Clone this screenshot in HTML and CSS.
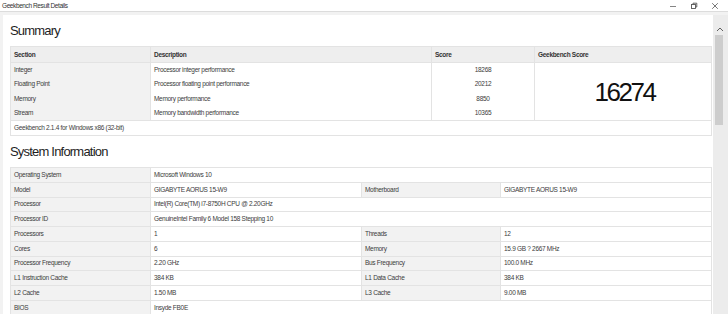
FILE: index.html
```html
<!DOCTYPE html>
<html>
<head>
<meta charset="utf-8">
<title>Geekbench Result Details</title>
<link rel="stylesheet" href="styles.css">
</head>
<body>
<div class="window">
  <div class="titlebar">
    <span class="title">Geekbench Result Details</span>
    <div class="controls">
      <span class="ctl"><svg width="8" height="8" viewBox="0 0 8 8"><line x1="1" y1="4.5" x2="7" y2="4.5" stroke="#666" stroke-width="0.8"/></svg></span>
      <span class="ctl"><svg width="8" height="8" viewBox="0 0 8 8"><rect x="1.5" y="2.5" width="4" height="4" fill="none" stroke="#555" stroke-width="0.9"/><path d="M3 2.5V1.2H6.8V5H5.5" fill="none" stroke="#555" stroke-width="0.9"/></svg></span>
      <span class="ctl"><svg width="8" height="8" viewBox="0 0 8 8"><path d="M1.2 1.2L6.8 6.8M6.8 1.2L1.2 6.8" stroke="#555" stroke-width="0.8"/></svg></span>
    </div>
  </div>
  <div class="frame">
    <main class="content">
      <h1 class="heading">Summary</h1>
      <table class="grid summary">
        <colgroup><col class="c140"><col class="c281"><col class="c103"><col class="c177"></colgroup>
        <tr class="head">
          <th>Section</th><th>Description</th><th>Score</th><th>Geekbench Score</th>
        </tr>
        <tr class="srow">
          <td class="label">Integer</td><td>Processor integer performance</td><td class="num">18268</td>
          <td class="big" rowspan="4">16274</td>
        </tr>
        <tr class="srow">
          <td class="label">Floating Point</td><td>Processor floating point performance</td><td class="num">20212</td>
        </tr>
        <tr class="srow">
          <td class="label">Memory</td><td>Memory performance</td><td class="num">8850</td>
        </tr>
        <tr class="srow">
          <td class="label">Stream</td><td>Memory bandwidth performance</td><td class="num">10365</td>
        </tr>
        <tr class="frow">
          <td colspan="4">Geekbench 2.1.4 for Windows x86 (32-bit)</td>
        </tr>
      </table>

      <h1 class="heading">System Information</h1>
      <table class="grid sysinfo">
        <colgroup><col class="c140"><col class="c211"><col class="c139"><col class="c211"></colgroup>
        <tr><td class="label">Operating System</td><td colspan="3">Microsoft Windows 10</td></tr>
        <tr><td class="label">Model</td><td>GIGABYTE AORUS 15-W9</td><td class="label">Motherboard</td><td>GIGABYTE AORUS 15-W9</td></tr>
        <tr><td class="label">Processor</td><td colspan="3">Intel(R) Core(TM) i7-8750H CPU @ 2.20GHz</td></tr>
        <tr><td class="label">Processor ID</td><td colspan="3">GenuineIntel Family 6 Model 158 Stepping 10</td></tr>
        <tr><td class="label">Processors</td><td>1</td><td class="label">Threads</td><td>12</td></tr>
        <tr><td class="label">Cores</td><td>6</td><td class="label">Memory</td><td>15.9 GB ? 2667 MHz</td></tr>
        <tr><td class="label">Processor Frequency</td><td>2.20 GHz</td><td class="label">Bus Frequency</td><td>100.0 MHz</td></tr>
        <tr><td class="label">L1 Instruction Cache</td><td>384 KB</td><td class="label">L1 Data Cache</td><td>384 KB</td></tr>
        <tr><td class="label">L2 Cache</td><td>1.50 MB</td><td class="label">L3 Cache</td><td>9.00 MB</td></tr>
        <tr><td class="label">BIOS</td><td colspan="3">Insyde FB0E</td></tr>
      </table>
    </main>
    <div class="scrollbar">
      <svg class="arrow" width="8" height="5" viewBox="0 0 8 5"><path d="M1 4L4 1L7 4" fill="none" stroke="#606060" stroke-width="1"/></svg>
      <div class="thumb"></div>
    </div>
  </div>
</div>
</body>
</html>
```

FILE: styles.css
```css
* { box-sizing: border-box; }

html, body {
  margin: 0;
  padding: 0;
}

body {
  width: 728px;
  height: 314px;
  overflow: hidden;
  background: #f2f2f2;
  font-family: "Liberation Sans", Arial, sans-serif;
}

.window {
  display: flex;
  flex-direction: column;
  height: 314px;
}

.titlebar {
  display: flex;
  align-items: center;
  justify-content: space-between;
  height: 12px;
  flex: none;
  background: #ffffff;
  border-bottom: 1px solid #dcdcdc;
  padding: 0 3px 0 2px;
}

.title {
  font-size: 6.5px;
  letter-spacing: -0.4px;
  color: #333;
  line-height: 11px;
}

.controls {
  display: flex;
  height: 11px;
}

.ctl {
  width: 21px;
  height: 11px;
  display: flex;
  align-items: center;
  justify-content: center;
}

.ctl svg { display: block; }

.frame {
  flex: 1;
  display: flex;
  padding: 3px 0 0 3px;
  min-height: 0;
}

.content {
  flex: none;
  width: 710px;
  background: #ffffff;
  padding: 0 2px 0 7px;
  overflow: hidden;
}

.heading {
  margin: 7.5px 0;
  font-size: 13px;
  line-height: 16px;
  font-weight: normal;
  letter-spacing: -0.8px;
  color: #1e1e1e;
}

.grid {
  width: 701px;
  border-collapse: collapse;
  table-layout: fixed;
  border: 1px solid #dedede;
  font-size: 6.5px;
  letter-spacing: -0.3px;
  color: #3c3c3c;
}

.c140 { width: 140px; }
.c281 { width: 281px; }
.c103 { width: 103px; }
.c177 { width: 177px; }
.c211 { width: 211px; }
.c139 { width: 139px; }

.grid th,
.grid td {
  border: 1px solid #e3e3e3;
  padding: 0 3px;
  text-align: left;
  vertical-align: middle;
  white-space: nowrap;
  overflow: hidden;
  line-height: 8px;
}

.grid th {
  background: #eeeeee;
  font-weight: bold;
  color: #333;
}

.head { height: 16px; }
.srow { height: 14.5px; }
.frow { height: 15px; }

.summary .srow td {
  border-top: 0 none;
  border-bottom: 0 none;
}

.grid td.label {
  background: #f2f2f2;
}

.grid td.num {
  text-align: center;
}

.grid td.big {
  text-align: center;
  font-size: 26px;
  line-height: 26px;
  letter-spacing: -2.5px;
  color: #111;
  padding: 0 0 0 3px;
}

.sysinfo tr { height: 14.75px; }

.scrollbar {
  flex: none;
  width: 15px;
  background: #ececec;
  padding: 12px 0 0 2px;
  display: flex;
  flex-direction: column;
  align-items: flex-start;
}

.arrow {
  display: block;
  margin-left: 1px;
}

.thumb {
  margin-top: 3px;
  width: 8px;
  height: 90px;
  background: #cdcdcd;
}
```
